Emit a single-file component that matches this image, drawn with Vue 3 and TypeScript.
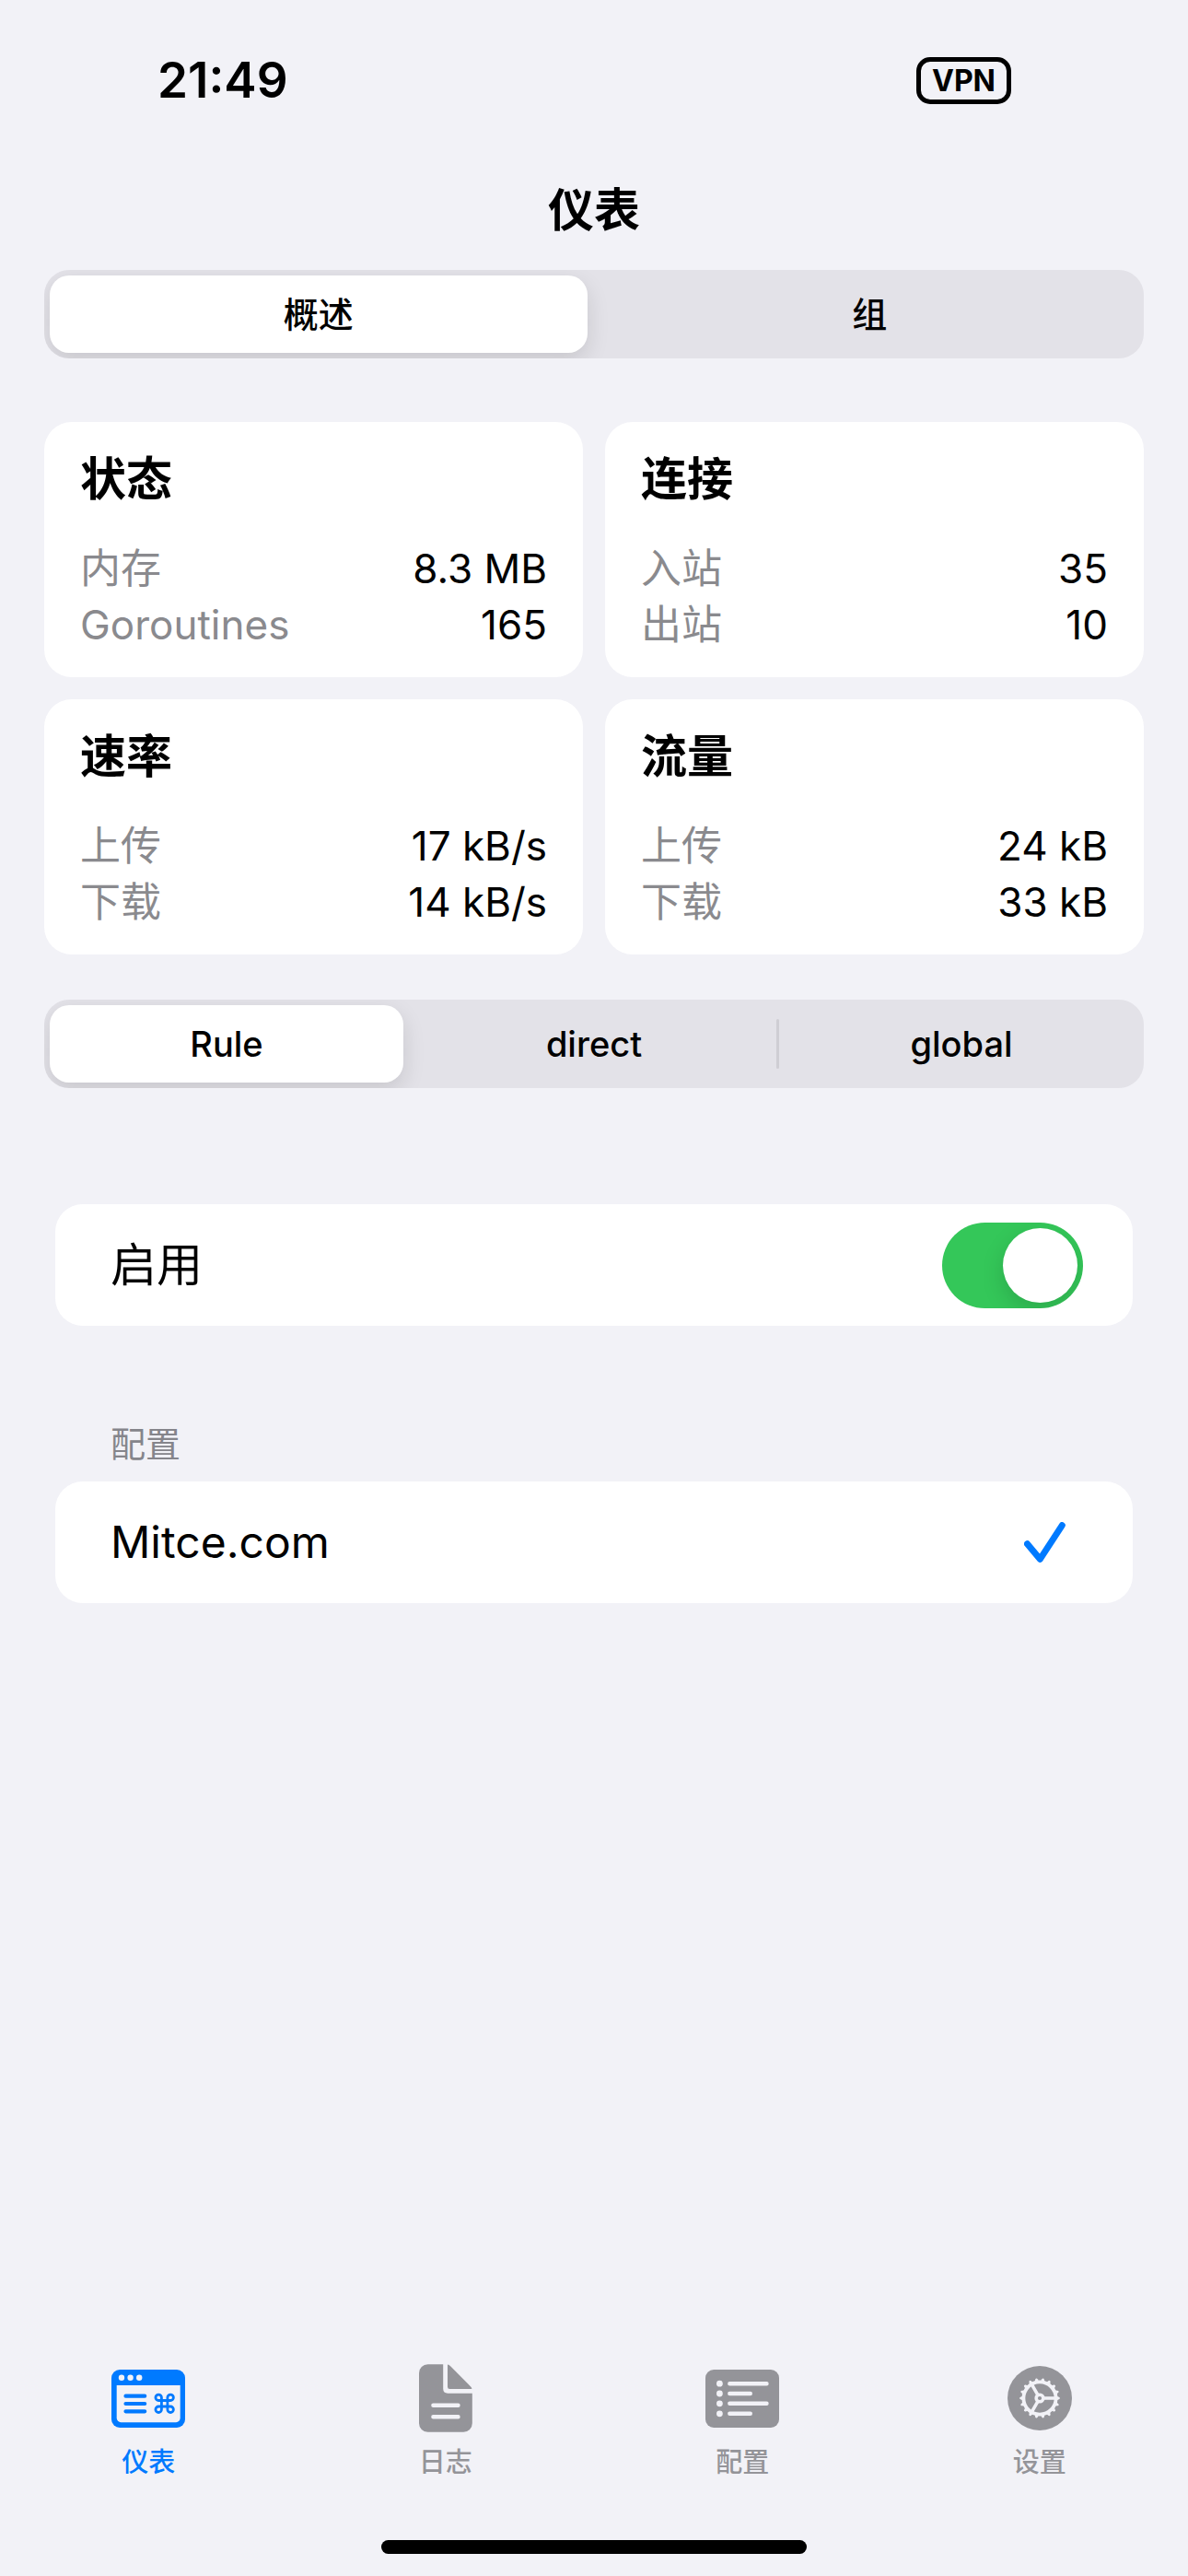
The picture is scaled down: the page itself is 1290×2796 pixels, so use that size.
<script setup lang="ts">
import { ref } from 'vue'

interface StatRow {
  label: string
  value: string
}

interface StatCard {
  title: string
  rows: StatRow[]
}

type TabId = 'dashboard' | 'logs' | 'profiles' | 'settings'

const sections: string[] = ['概述', '组']
const modes: string[] = ['Rule', 'direct', 'global']

const cards: StatCard[] = [
  {
    title: '状态',
    rows: [
      { label: '内存', value: '8.3 MB' },
      { label: 'Goroutines', value: '165' },
    ],
  },
  {
    title: '连接',
    rows: [
      { label: '入站', value: '35' },
      { label: '出站', value: '10' },
    ],
  },
  {
    title: '速率',
    rows: [
      { label: '上传', value: '17 kB/s' },
      { label: '下载', value: '14 kB/s' },
    ],
  },
  {
    title: '流量',
    rows: [
      { label: '上传', value: '24 kB' },
      { label: '下载', value: '33 kB' },
    ],
  },
]

const profiles: string[] = ['Mitce.com']

const tabs: { id: TabId; label: string }[] = [
  { id: 'dashboard', label: '仪表' },
  { id: 'logs', label: '日志' },
  { id: 'profiles', label: '配置' },
  { id: 'settings', label: '设置' },
]

const gearTeeth: number[] = Array.from({ length: 18 }, (_, i) => i * 20)

const section = ref('概述')
const mode = ref('Rule')
const enabled = ref(true)
const profile = ref('Mitce.com')
const activeTab = ref<TabId>('dashboard')
</script>

<template>
  <div class="screen">
    <header>
      <div class="status-bar">
        <time class="clock">21:49</time>
        <span class="vpn">VPN</span>
      </div>
      <h1 class="nav-title">仪表</h1>
    </header>

    <main class="content">
      <div class="segmented" role="group" aria-label="仪表">
        <template v-for="(name, i) in sections" :key="name">
          <span
            v-if="i > 0"
            class="divider"
            :class="{ hidden: section === name || section === sections[i - 1] }"
          ></span>
          <button
            type="button"
            class="segment"
            :class="{ selected: section === name }"
            :aria-pressed="section === name"
            @click="section = name"
          >
            {{ name }}
          </button>
        </template>
      </div>

      <div class="cards">
        <section v-for="card in cards" :key="card.title" class="card">
          <h2>{{ card.title }}</h2>
          <dl>
            <div v-for="row in card.rows" :key="row.label" class="stat">
              <dt>{{ row.label }}</dt>
              <dd>{{ row.value }}</dd>
            </div>
          </dl>
        </section>
      </div>

      <div class="segmented" role="group" aria-label="Mode">
        <template v-for="(name, i) in modes" :key="name">
          <span
            v-if="i > 0"
            class="divider"
            :class="{ hidden: mode === name || mode === modes[i - 1] }"
          ></span>
          <button
            type="button"
            class="segment"
            :class="{ selected: mode === name }"
            :aria-pressed="mode === name"
            @click="mode = name"
          >
            {{ name }}
          </button>
        </template>
      </div>

      <div class="list">
        <div class="list-row">
          <label for="enabled">启用</label>
          <input id="enabled" v-model="enabled" type="checkbox" role="switch" class="switch" />
        </div>
      </div>

      <section class="profiles">
        <h3>配置</h3>
        <div class="list">
          <button
            v-for="name in profiles"
            :key="name"
            type="button"
            class="list-row"
            :aria-pressed="profile === name"
            @click="profile = name"
          >
            <span>{{ name }}</span>
            <svg v-if="profile === name" class="check" width="45" height="44" viewBox="0 0 45 44" aria-hidden="true">
              <path d="M3.5 23.8 17.3 40.3 41.3 3.6" />
            </svg>
          </button>
        </div>
      </section>
    </main>

    <footer>
      <nav class="tab-bar">
        <button
          v-for="tab in tabs"
          :key="tab.id"
          type="button"
          class="tab"
          :class="{ active: activeTab === tab.id }"
          @click="activeTab = tab.id"
        >
          <span class="tab-icon">
            <svg v-if="tab.id === 'dashboard'" width="80" height="63" viewBox="0 0 80 63" aria-hidden="true">
              <rect width="80" height="63" rx="9" fill="currentColor" />
              <path d="M5.7 17H74.7V52.6A4.6 4.6 0 0 1 70.1 57.2H10.3A4.6 4.6 0 0 1 5.7 52.6Z" class="cut" />
              <circle cx="11" cy="8.8" r="3.2" class="cut" />
              <circle cx="20.6" cy="8.8" r="3.2" class="cut" />
              <circle cx="30.2" cy="8.8" r="3.2" class="cut" />
              <path
                d="M15.5 28.7H36.2M15.5 37H36.2M15.5 45.3H36.2"
                fill="none"
                stroke="currentColor"
                stroke-width="4.2"
                stroke-linecap="round"
              />
              <path
                transform="translate(44.7 23.8) scale(1.08)"
                d="M18 3a3 3 0 0 0-3 3v12a3 3 0 1 0 3-3H6a3 3 0 1 0 3 3V6a3 3 0 1 0-3 3h12a3 3 0 0 0 0-6"
                fill="none"
                stroke="currentColor"
                stroke-width="2.6"
              />
            </svg>
            <svg v-else-if="tab.id === 'logs'" width="58" height="74" viewBox="0 0 58 74" aria-hidden="true">
              <path
                d="M9.5 0.3H26.2V26.8Q26.2 31.7 31.2 31.7H57.8V64.2A9.5 9.5 0 0 1 48.3 73.7H9.5A9.5 9.5 0 0 1 0 64.2V9.8A9.5 9.5 0 0 1 9.5 0.3Z"
                fill="currentColor"
              />
              <path
                d="M31 1.2Q31 0 32.2 0.8Q33.2 1.4 34.4 2.6L55.2 23.4Q56.6 24.8 57.2 26Q57.8 27 56.6 27H33.2Q31 27 31 24.8Z"
                fill="currentColor"
              />
              <path d="M15.4 44.7H42.5M15.4 57.3H42.5" class="cut-line" stroke-width="4.4" />
            </svg>
            <svg v-else-if="tab.id === 'profiles'" width="80" height="63" viewBox="0 0 80 63" aria-hidden="true">
              <rect width="80" height="63" rx="9" fill="currentColor" />
              <circle cx="15.4" cy="15.2" r="3.4" class="cut" />
              <circle cx="15.4" cy="26" r="3.4" class="cut" />
              <circle cx="15.4" cy="36.8" r="3.4" class="cut" />
              <circle cx="15.4" cy="47.8" r="3.4" class="cut" />
              <path
                d="M26.3 15.2H66.5M26.3 26H48.8M26.3 36.8H66.5M26.3 47.8H48.8"
                class="cut-line"
                stroke-width="4.4"
              />
            </svg>
            <svg v-else width="70" height="70" viewBox="-35 -35 70 70" aria-hidden="true">
              <circle r="35" fill="currentColor" />
              <circle r="17.6" class="cut-line" stroke-width="3.8" />
              <path
                v-for="angle in gearTeeth"
                :key="angle"
                d="M18.5 -2.2 20.9 -1.3Q21.9 -0.9 21.9 0 21.9 0.9 20.9 1.3L18.5 2.2Z"
                class="cut"
                :transform="`rotate(${angle})`"
              />
              <path d="M4 0H17M-2 -3.46-8.5 -14.7M-2 3.46-8.5 14.7" class="cut-line" stroke-width="3.6" />
              <circle r="5.6" class="cut" />
              <circle r="2.1" fill="currentColor" />
            </svg>
          </span>
          <span class="tab-label">{{ tab.label }}</span>
        </button>
      </nav>
      <div class="home-indicator"></div>
    </footer>
  </div>
</template>

<style>
body {
  background: #f2f2f7;
}
</style>

<style scoped>
.screen {
  display: flex;
  flex-direction: column;
  box-sizing: border-box;
  min-height: 100vh;
  background: #f2f2f7;
  color: #000;
  font-family: Inter, 'Noto Sans CJK SC', sans-serif;
  font-size: 50px;
}

h1,
h2,
h3,
dl,
dd {
  margin: 0;
}

button {
  margin: 0;
  padding: 0;
  border: 0;
  background: none;
  color: inherit;
  font: inherit;
}

.status-bar {
  display: flex;
  justify-content: space-between;
  align-items: center;
  padding: 62px 192px 50px 171px;
}

.clock {
  font-size: 53px;
  font-weight: 600;
  line-height: 51px;
}

.vpn {
  box-sizing: border-box;
  padding: 0 12px;
  border: 5px solid #000;
  border-radius: 15px;
  font-size: 32px;
  font-weight: 700;
  line-height: 41px;
}

.nav-title {
  font-size: 50px;
  font-weight: 600;
  line-height: 130px;
  text-align: center;
}

.content {
  display: flex;
  flex-direction: column;
  padding: 0 48px;
}

.segmented {
  display: flex;
  align-items: center;
  padding: 6px;
  overflow: hidden;
  border-radius: 27px;
  background: #e3e2e8;
}

.segment {
  flex: 1 1 0;
  height: 84px;
  border-radius: 21px;
  font-size: 38px;
  font-weight: 500;
  line-height: 84px;
}

.segment.selected {
  background: #fff;
  box-shadow: 0 9px 24px rgba(0, 0, 0, 0.12);
}

.divider {
  width: 3px;
  height: 54px;
  margin: 0 6px;
  border-radius: 2px;
  background: #cfced4;
}

.divider.hidden {
  background: transparent;
}

.cards {
  display: grid;
  grid-template-columns: 1fr 1fr;
  gap: 24px;
  margin: 69px 0 49px;
}

.card {
  padding: 31px 39px 26px;
  border-radius: 30px;
  background: #fff;
}

.card h2 {
  margin-bottom: 36px;
  font-size: 50px;
  font-weight: 600;
  line-height: 62px;
}

.stat {
  display: flex;
  justify-content: space-between;
  font-size: 44px;
  line-height: 61px;
}

.stat dt {
  color: #8a8a8e;
}

.list {
  overflow: hidden;
  margin: 0 12px;
  border-radius: 30px;
  background: #fff;
}

.segmented + .list {
  margin-top: 126px;
}

.list-row {
  display: flex;
  justify-content: space-between;
  align-items: center;
  box-sizing: border-box;
  width: 100%;
  height: 132px;
  padding: 0 54px 0 60px;
  line-height: 132px;
}

button.list-row {
  padding-right: 73px;
  font-size: 48px;
}

.switch {
  flex: none;
  width: 153px;
  height: 93px;
  margin: 0;
  overflow: hidden;
  border-radius: 47px;
  background: #e9e9eb;
  appearance: none;
}

.switch::before {
  content: '';
  display: block;
  width: 81px;
  height: 81px;
  margin: 6px;
  border-radius: 50%;
  background: #fff;
  box-shadow: 0 9px 24px rgba(0, 0, 0, 0.15);
}

.switch:checked {
  background: #34c759;
}

.switch:checked::before {
  margin-left: 66px;
}

.profiles h3 {
  margin: 101px 72px 14px;
  color: #85858b;
  font-size: 38px;
  font-weight: 400;
  line-height: 54px;
}

.check {
  fill: none;
  stroke: #007aff;
  stroke-width: 7;
  stroke-linecap: round;
  stroke-linejoin: round;
}

footer {
  margin-top: auto;
}

.tab-bar {
  display: flex;
}

.tab {
  display: flex;
  flex: 1 1 0;
  flex-direction: column;
  align-items: center;
  gap: 11px;
  color: #949499;
}

.tab.active {
  color: #007aff;
}

.tab-icon {
  display: flex;
  align-items: center;
  height: 74px;
}

.tab-label {
  font-size: 29px;
  font-weight: 500;
  line-height: 44px;
}

.cut {
  fill: #f2f2f7;
}

.cut-line {
  fill: none;
  stroke: #f2f2f7;
  stroke-linecap: round;
}

.home-indicator {
  width: 462px;
  height: 15px;
  margin: 62px auto 24px;
  border-radius: 8px;
  background: #000;
}
</style>
